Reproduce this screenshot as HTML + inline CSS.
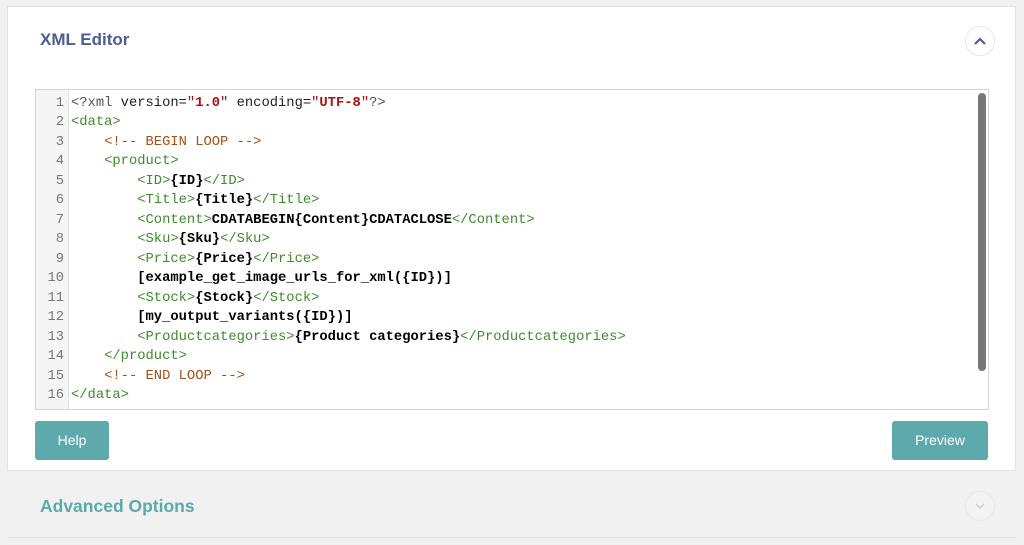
<!DOCTYPE html>
<html><head><style>
body{margin:0;width:1024px;height:545px;background:#f0f0f1;font-family:"Liberation Sans",sans-serif;position:relative;overflow:hidden}
.panel{position:absolute;left:7px;top:6px;width:1009px;height:532px;background:#fff;border:1px solid #e2e2e2;box-sizing:border-box}
.title{position:absolute;left:40px;top:30px;font-size:17px;font-weight:bold;color:#4a5e92}
.circ{position:absolute;width:30px;height:30px;border:1px solid #e6e6e6;border-radius:50%;box-sizing:border-box;background:#fff}
.ed{position:absolute;left:35px;top:89px;width:954px;height:321px;border:1px solid #d5d5d5;box-sizing:border-box;background:#fff}
.gut{position:absolute;left:0;top:0;width:32px;height:100%;background:#f5f5f5;border-right:1px solid #e0e0e0}
pre{margin:0;position:absolute;top:4px;font-family:"Liberation Mono",monospace;font-size:13.8px;line-height:19.47px}
.ln{left:0;width:28px;text-align:right;color:#777}
.code{left:35px;color:#222}
.t{color:#3c8c2c}.c{color:#a0521a}.s{color:#a11}b{color:#000}
.sb{position:absolute;left:942px;top:3px;width:8px;height:278px;background:#777;border-radius:4px}
.btn{position:absolute;top:421px;height:39px;background:#5ea9ac;color:#fff;font-size:14px;line-height:39px;text-align:center;border-radius:3px}
.adv{position:absolute;left:7px;top:470px;width:1009px;height:68px;background:#f1f1f1;border-top:1px solid #e2e2e2;border-bottom:1px solid #e2e2e2;box-sizing:border-box}
</style></head><body>
<div class="panel"></div>
<div class="title">XML Editor</div>
<div class="circ" style="left:965px;top:26px"><svg width="28" height="28" style="position:absolute;left:0;top:0"><path d="M9 17 L14 12 L19 17" stroke="#4a5e92" stroke-width="2.2" fill="none"/></svg></div>
<div class="ed"><div class="gut"></div>
<pre class="ln">1
2
3
4
5
6
7
8
9
10
11
12
13
14
15
16</pre>
<pre class="code"><span style="color:#555">&lt;?xml</span> version=<span class="s">"<b style="color:#a11">1.0</b>"</span> encoding=<span class="s">"<b style="color:#a11">UTF-8</b>"</span><span style="color:#555">?&gt;</span>
<span class="t">&lt;data&gt;</span>
    <span class="c">&lt;!-- BEGIN LOOP --&gt;</span>
    <span class="t">&lt;product&gt;</span>
        <span class="t">&lt;ID&gt;</span><b>{ID}</b><span class="t">&lt;/ID&gt;</span>
        <span class="t">&lt;Title&gt;</span><b>{Title}</b><span class="t">&lt;/Title&gt;</span>
        <span class="t">&lt;Content&gt;</span><b>CDATABEGIN{Content}CDATACLOSE</b><span class="t">&lt;/Content&gt;</span>
        <span class="t">&lt;Sku&gt;</span><b>{Sku}</b><span class="t">&lt;/Sku&gt;</span>
        <span class="t">&lt;Price&gt;</span><b>{Price}</b><span class="t">&lt;/Price&gt;</span>
        <b>[example_get_image_urls_for_xml({ID})]</b>
        <span class="t">&lt;Stock&gt;</span><b>{Stock}</b><span class="t">&lt;/Stock&gt;</span>
        <b>[my_output_variants({ID})]</b>
        <span class="t">&lt;Productcategories&gt;</span><b>{Product categories}</b><span class="t">&lt;/Productcategories&gt;</span>
    <span class="t">&lt;/product&gt;</span>
    <span class="c">&lt;!-- END LOOP --&gt;</span>
<span class="t">&lt;/data&gt;</span></pre>
<div class="sb"></div>
</div>
<div class="btn" style="left:35px;width:74px">Help</div>
<div class="btn" style="left:892px;width:96px">Preview</div>
<div class="adv"></div>
<div style="position:absolute;left:40px;top:496px;font-size:17.5px;font-weight:bold;color:#5aa9ad">Advanced Options</div>
<div class="circ" style="left:965px;top:491px;background:#f3f3f3;border-color:#e8e8e8"><svg width="28" height="28" style="position:absolute;left:0;top:0"><path d="M10 12 L14 16 L18 12" stroke="#ccc" stroke-width="1.5" fill="none"/></svg></div>
</body></html>
